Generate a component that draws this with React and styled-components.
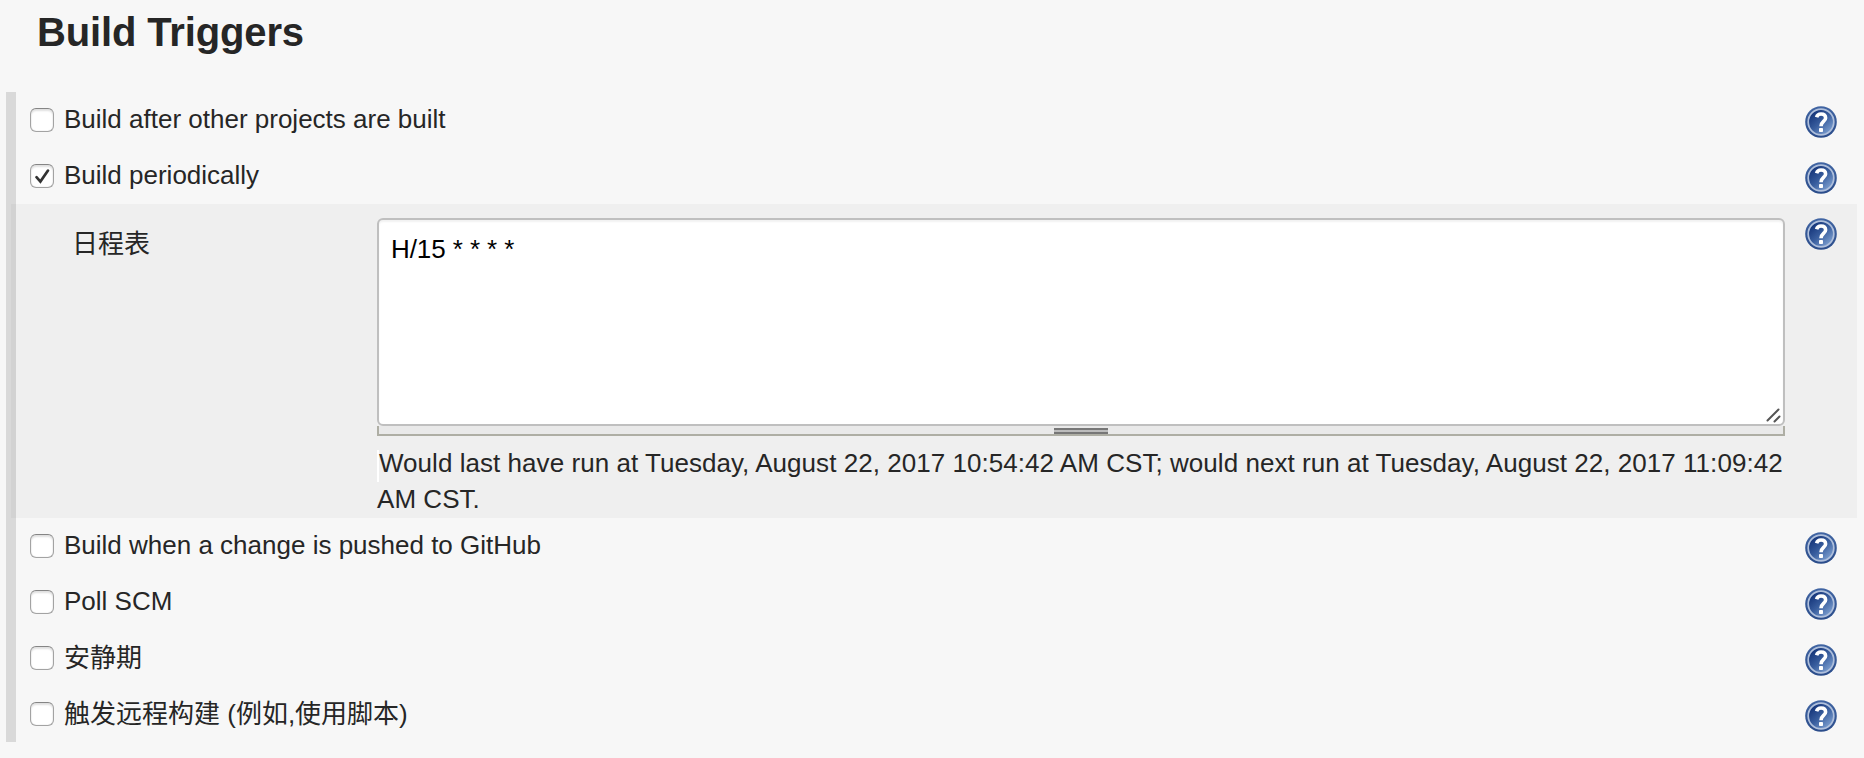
import React from "react";
import styled, { createGlobalStyle } from "styled-components";

const GlobalStyle = createGlobalStyle`
  * { box-sizing: border-box; }
  body {
    margin: 0;
    height: 758px;
    overflow: hidden;
    background: #f7f7f7;
    color: #262626;
    font: 26px/36px "Liberation Sans", "Noto Sans CJK SC", sans-serif;
  }
`;

const Page = styled.main`
  padding: 8px 7px 0 6px;
`;

const Title = styled.h2`
  margin: 0 0 32px 31px;
  height: 52px;
  font-size: 40px;
  line-height: 48px;
  letter-spacing: -0.14px;
  white-space: nowrap;
`;

const Triggers = styled.section`
  background: linear-gradient(#d9d9d9, #d9d9d9) 0 0 / 10px 100% no-repeat;
`;

const Row = styled.div`
  display: flex;
  align-items: flex-start;
  height: 56px;
  padding: 9px 20px 0 24px;
`;

const Label = styled.label`
  display: flex;
  flex: 1;
  white-space: nowrap;
`;

const Caption = styled.span`
  padding-top: ${(p) => (p.lang === "zh" ? 1 : 0)}px;
`;

const Box = styled.span`
  width: 24px;
  height: 24px;
  margin: 7px 10px 0 0;
  border: 1px solid #a3a3a3;
  border-top-color: #858585;
  border-radius: 6px;
  background: #fff;
  box-shadow: inset 0 2px 2px #e0e0e0, inset 0 0 1px #bbb;

  svg { display: block; }
`;

const HelpButton = styled.span`
  flex: none;
  width: 32px;
  height: 32px;
  margin-top: ${(p) => p.$drop || 0}px;

  svg { display: block; }
`;

const Panel = styled.div`
  display: flex;
  align-items: flex-start;
  height: 314px;
  margin-left: 5px;
  padding: 14px 20px 0 61px;
  background: rgba(0, 0, 0, 0.032);
`;

const FieldName = styled.div`
  width: 305px;
  padding-top: 8px;
`;

const Field = styled.div`
  width: 1408px;
  margin-right: 20px;
`;

const TextBox = styled.div`
  display: flex;
  justify-content: space-between;
  height: 208px;
  padding: 11px 2px 0 12px;
  border: 2px solid #bfbfbf;
  border-radius: 6px;
  background: #fff;
  box-shadow: inset 0 2px 2px #f2f2f2;
  color: #000;
  letter-spacing: -0.08px;
  white-space: nowrap;

  svg { align-self: flex-end; }
`;

const ResizeBar = styled.div`
  display: flex;
  justify-content: center;
  height: 10px;
  padding-top: 2px;
  border: solid #aeaea4;
  border-width: 0 2px 2px;
  background: #e9e9e9;
`;

const Grip = styled.div`
  width: 54px;
  height: 6px;
  border: solid #777;
  border-width: 2px 0;
  background: #bcbcbc;
`;

const Message = styled.div`
  margin-top: 9px;
  white-space: nowrap;
`;

const MessageLine = styled.div`
  display: flex;
  height: 36px;
  letter-spacing: 0.043px;

  &:first-child::before {
    content: "";
    width: 2px;
    height: 32px;
    margin-top: 5px;
    background: #fff;
  }
`;

function Help({ drop }) {
  return (
    <HelpButton $drop={drop}>
      <svg width="32" height="32" viewBox="0 0 32 32">
        <defs>
          <linearGradient id="helpFill" x1="0.15" y1="0.15" x2="0.85" y2="0.9">
            <stop offset="0" stopColor="#15357a" />
            <stop offset="0.5" stopColor="#3a5f9f" />
            <stop offset="1" stopColor="#7d9fd0" />
          </linearGradient>
          <linearGradient id="helpRim" x1="0" y1="0" x2="0" y2="1">
            <stop offset="0" stopColor="#4165a3" />
            <stop offset="1" stopColor="#2a4c8a" />
          </linearGradient>
        </defs>
        <circle cx="16" cy="16" r="15.8" fill="url(#helpRim)" />
        <circle cx="16" cy="16" r="12.8" fill="url(#helpFill)" stroke="#b0c0dc" strokeWidth="1.7" />
        <path d="M11.6 11.2C12.3 8.5 14 8 16 8C19 8 20.6 9.5 20.6 11.9C20.6 15.5 16 15.4 16 20.2" fill="none" stroke="#fff" strokeWidth="3.6" />
        <rect x="14" y="22" width="4" height="4" rx="0.8" fill="#fff" />
      </svg>
    </HelpButton>
  );
}

function Trigger({ text, lang, checked }) {
  return (
    <Row>
      <Label>
        <Box>
          {checked && (
            <svg width="22" height="22" viewBox="0 0 22 22" fill="none" stroke="#333" strokeWidth="2.7" strokeLinecap="round">
              <path d="M5.5 12.2L9.4 16.6L17 5.6" />
            </svg>
          )}
        </Box>
        <Caption lang={lang}>{text}</Caption>
      </Label>
      <Help drop={5} />
    </Row>
  );
}

export default function App() {
  return (
    <Page>
      <GlobalStyle />
      <Title>Build Triggers</Title>
      <Triggers>
        <Trigger text="Build after other projects are built" />
        <Trigger text="Build periodically" checked />
        <Panel>
          <FieldName>日程表</FieldName>
          <Field>
            <TextBox>
              <span>H/15 * * * *</span>
              <svg width="16" height="16" viewBox="0 0 16 16" fill="none" stroke="#555" strokeWidth="2" strokeLinecap="round">
                <path d="M2.5 12.5L13.5 1.5M9.5 13.5L14.5 8.5" />
              </svg>
            </TextBox>
            <ResizeBar><Grip /></ResizeBar>
            <Message>
              <MessageLine>Would last have run at Tuesday, August 22, 2017 10:54:42 AM CST; would next run at Tuesday, August 22, 2017 11:09:42</MessageLine>
              <MessageLine>AM CST.</MessageLine>
            </Message>
          </Field>
          <Help />
        </Panel>
        <Trigger text="Build when a change is pushed to GitHub" />
        <Trigger text="Poll SCM" />
        <Trigger text="安静期" lang="zh" />
        <Trigger text="触发远程构建 (例如,使用脚本)" lang="zh" />
      </Triggers>
    </Page>
  );
}
